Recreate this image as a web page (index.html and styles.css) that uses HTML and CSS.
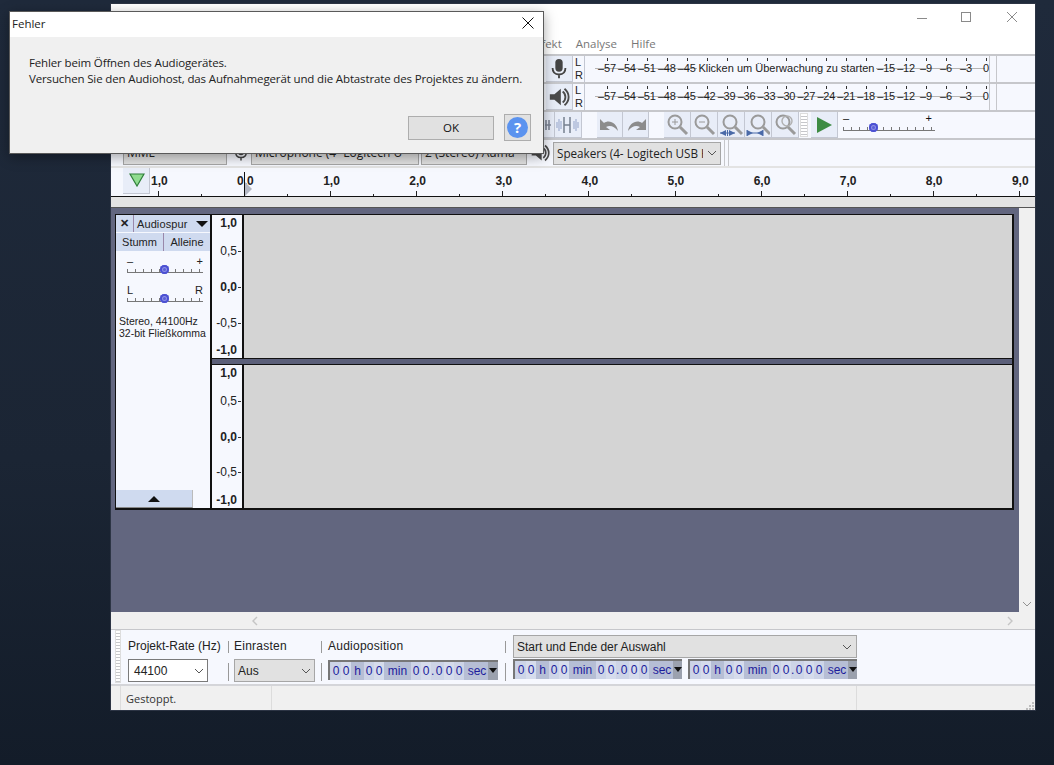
FILE: index.html
```html
<!DOCTYPE html>
<html lang="de">
<head>
<meta charset="utf-8">
<title>Audacity</title>
<link rel="stylesheet" href="styles.css">
</head>
<body>
<svg class="defs" width="0" height="0">
  <symbol id="mic" viewBox="0 0 24 24"><rect x="8" y="1" width="8" height="14" rx="4" fill="#444"/><path d="M5 11c0 5 3 7 7 7s7-2 7-7M12 18v4" fill="none" stroke="#444" stroke-width="2"/></symbol>
  <symbol id="spk" viewBox="0 0 24 24"><path d="M2 9h5l7-6v18l-7-6H2z" fill="#4a4a4a"/><path d="M16 6c4 3 4 9 0 12M18 3c6 5 6 13 0 18" fill="none" stroke="#4a4a4a" stroke-width="2"/></symbol>
  <symbol id="zm" viewBox="0 0 24 24"><circle cx="10" cy="9" r="6.5" fill="none" stroke="#9a9a9a" stroke-width="2"/><path d="M15 14l7 7" stroke="#9a9a9a" stroke-width="3"/></symbol>
  <symbol id="chev" viewBox="0 0 10 6"><path d="M1 1l4 4 4-4" fill="none" stroke="#555" stroke-width="1"/></symbol>
</svg>

<main class="app">
  <div class="titlebar">
    <span class="wc wc-min"></span>
    <span class="wc wc-max"></span>
    <svg class="wc-x" width="12" height="12" viewBox="0 0 12 12"><path d="M1 1l10 10M11 1L1 11" stroke="#8a8a8a" fill="none"/></svg>
  </div>
  <nav class="menu"><span>Effekt</span><span>Analyse</span><span>Hilfe</span></nav>

  <section class="tbrow meter-row">
    <button class="tbtn meter-btn"><svg width="22" height="24"><use href="#mic"/></svg></button>
    <div class="lr"><span>L</span><span>R</span></div>
    <div class="meter">
      <span>–57</span><span>–54</span><span>–51</span><span>–48</span><span>–45</span>
      <span class="meter-msg">Klicken um Überwachung zu starten</span>
      <span>–15</span><span>–12</span><span>–9</span><span>–6</span><span>–3</span><span>0</span>
    </div>
    <i class="grip"></i>
  </section>
  <section class="tbrow meter-row">
    <button class="tbtn meter-btn"><svg width="22" height="24"><use href="#spk"/></svg></button>
    <div class="lr"><span>L</span><span>R</span></div>
    <div class="meter">
      <span>–57</span><span>–54</span><span>–51</span><span>–48</span><span>–45</span><span>–42</span><span>–39</span><span>–36</span><span>–33</span><span>–30</span><span>–27</span><span>–24</span><span>–21</span><span>–18</span><span>–15</span><span>–12</span><span>–9</span><span>–6</span><span>–3</span><span>0</span>
    </div>
    <i class="grip"></i>
  </section>

  <section class="tbrow tools">
    <button class="tbtn b-w"><svg width="24" height="22" viewBox="0 0 24 22"><path d="M16 11h6" stroke="#7c8494" stroke-width="1.5" fill="none"/><path d="M17 6v10M20 6v10" stroke="#7c8494" stroke-width="1.6" fill="none"/></svg></button>
    <button class="tbtn b-w"><svg width="24" height="22" viewBox="0 0 24 22"><path d="M1 8v6M3 5v12M5 7v8M18 7v8M20 5v12M22 8v6" stroke="#93a3c9" fill="none"/><path d="M8 3v16M14 3v16M8 11h6" stroke="#76808f" stroke-width="1.5" fill="none"/></svg></button>
    <span class="gap-15"></span>
    <button class="tbtn b-u"><svg width="24" height="16" viewBox="0 0 24 16"><path d="M2 2v11h10l-4-3c4-2 8-1 12 4-1-8-9-12-14-8z" fill="#8c8c8c"/></svg></button>
    <button class="tbtn b-u"><svg width="24" height="16" viewBox="0 0 24 16"><path d="M22 2v11H12l4-3c-4-2-8-1-12 4 1-8 9-12 14-8z" fill="#8c8c8c"/></svg></button>
    <span class="gap-15"></span>
    <button class="tbtn b-w"><svg width="24" height="24"><use href="#zm"/><path d="M7 9h6M10 6v6" stroke="#9a9a9a"/></svg></button>
    <button class="tbtn b-w"><svg width="24" height="24"><use href="#zm"/><path d="M7 9h6" stroke="#9a9a9a"/></svg></button>
    <button class="tbtn b-w"><svg width="24" height="24"><use href="#zm" x="1"/><path d="M1 20h15" stroke="#4a6aa8"/><path d="M1 20l6-3v6zM16 20l-6-3v6z" fill="#4a6aa8"/><path d="M8.5 17v6" stroke="#4a6aa8"/></svg></button>
    <button class="tbtn b-w"><svg width="24" height="24"><use href="#zm" x="2"/><path d="M1 20h16M1 17v6M17 17v6" stroke="#4a6aa8"/><path d="M1 17l6 3-6 3zM17 17l-6 3 6 3z" fill="#4a6aa8"/></svg></button>
    <button class="tbtn b-w"><svg width="24" height="24"><use href="#zm"/><circle cx="14" cy="8" r="5" fill="none" stroke="#b0b0b0" stroke-width="1.4"/></svg></button>
    <i class="grip-v"></i>
    <button class="tbtn b-play"><svg width="18" height="18" viewBox="0 0 18 18"><path d="M2 1l15 8-15 8z" fill="#3d8b43"/></svg></button>
    <div class="speed">
      <div class="speed-ends"><span>–</span><span>+</span></div>
      <div class="slider speed-track"><b class="thumb thumb-speed"></b></div>
    </div>
  </section>

  <section class="tbrow devices">
    <div class="sel sel-host"><span>MME</span></div>
    <svg class="dev-ico" width="18" height="22"><use href="#mic"/></svg>
    <div class="sel sel-mic"><span>Microphone (4- Logitech U</span></div>
    <div class="sel sel-ch"><span>2 (Stereo) Aufna</span></div>
    <svg class="dev-ico dev-spk" width="20" height="22"><use href="#spk"/></svg>
    <div class="sel sel-spk"><span>Speakers (4- Logitech USB H</span><svg width="10" height="6"><use href="#chev"/></svg></div>
    <i class="grip-dev"></i>
  </section>

  <section class="ruler">
    <button class="pin"><svg width="16" height="14" viewBox="0 0 16 14"><path d="M1 1h14L8 13z" fill="#8fdc8f" stroke="#2f7f3a" stroke-width="1.2"/></svg></button>
    <div class="ticks">
      <span>1,0</span><span class="zero">0,0</span><span>1,0</span><span>2,0</span><span>3,0</span><span>4,0</span><span>5,0</span><span>6,0</span><span>7,0</span><span>8,0</span><span>9,0</span>
    </div>
  </section>
  <div class="under-ruler"></div>

  <section class="workspace">
    <div class="tracks">
      <div class="track">
        <aside class="panel">
          <div class="p-head"><span class="p-x">✕</span><span class="p-name">Audiospur</span><i class="tri-down"></i></div>
          <div class="p-btns"><span>Stumm</span><span>Alleine</span></div>
          <div class="p-ends p-ends-gain"><span>–</span><span>+</span></div>
          <div class="slider p-slider"><b class="thumb"></b></div>
          <div class="p-ends p-ends-pan"><span>L</span><span>R</span></div>
          <div class="slider p-slider"><b class="thumb"></b></div>
          <p class="p-info">Stereo, 44100Hz<br>32-bit Fließkomma</p>
          <div class="p-collapse"><i class="tri-up"></i></div>
        </aside>
        <div class="channels">
          <div class="channel ch-1">
            <div class="scale"><b>1,0</b><span>0,5</span><b>0,0</b><span>-0,5</span><b>-1,0</b></div>
            <div class="wave"></div>
          </div>
          <div class="channel ch-2">
            <div class="scale"><b>1,0</b><span>0,5</span><b>0,0</b><span>-0,5</span><b>-1,0</b></div>
            <div class="wave"></div>
          </div>
        </div>
      </div>
    </div>
    <div class="vscroll"><svg width="10" height="6"><use href="#chev"/></svg></div>
  </section>
  <div class="hscroll">
    <svg width="6" height="10" viewBox="0 0 6 10"><path d="M5 1L1 5l4 4" fill="none" stroke="#aaa" stroke-width="1.4"/></svg>
    <svg width="6" height="10" viewBox="0 0 6 10"><path d="M1 1l4 4-4 4" fill="none" stroke="#aaa" stroke-width="1.4"/></svg>
  </div>

  <section class="selbar">
    <i class="grip-sel"></i>
    <div class="col col-rate">
      <label>Projekt-Rate (Hz)</label>
      <div class="sel sel-rate"><span>44100</span><svg width="10" height="6"><use href="#chev"/></svg></div>
    </div>
    <i class="seps"></i>
    <div class="col col-snap">
      <label>Einrasten</label>
      <div class="sel sel-snap"><span>Aus</span><svg width="10" height="6"><use href="#chev"/></svg></div>
    </div>
    <i class="seps"></i>
    <div class="col col-pos">
      <label>Audioposition</label>
      <div class="time"><u>0</u><u>0</u><em class="uh">h</em><u>0</u><u>0</u><em class="um">min</em><u>0</u><u>0</u><s>.</s><u>0</u><u>0</u><u>0</u><em class="us">sec</em><i class="t-arrow"></i></div>
    </div>
    <i class="seps"></i>
    <div class="col col-range">
      <div class="sel sel-range"><span>Start und Ende der Auswahl</span><svg width="10" height="6"><use href="#chev"/></svg></div>
      <div class="times">
        <div class="time"><u>0</u><u>0</u><em class="uh">h</em><u>0</u><u>0</u><em class="um">min</em><u>0</u><u>0</u><s>.</s><u>0</u><u>0</u><u>0</u><em class="us">sec</em><i class="t-arrow"></i></div>
        <div class="time"><u>0</u><u>0</u><em class="uh">h</em><u>0</u><u>0</u><em class="um">min</em><u>0</u><u>0</u><s>.</s><u>0</u><u>0</u><u>0</u><em class="us">sec</em><i class="t-arrow"></i></div>
      </div>
    </div>
  </section>

  <footer class="status">
    <span class="st-main">Gestoppt.</span>
    <span class="st-fill"></span>
    <svg class="st-grip" width="9" height="9" viewBox="0 0 9 9"><path d="M7 1h2v2H7zM4 4h2v2H4zM7 4h2v2H7zM1 7h2v2H1zM4 7h2v2H4zM7 7h2v2H7z" fill="#bdbdbd"/></svg>
  </footer>
</main>

<div class="dialog" role="dialog">
  <header class="d-title">
    <span>Fehler</span>
    <svg width="12" height="12" viewBox="0 0 12 12"><path d="M.5.5l11 11M11.5.5l-11 11" stroke="#111" fill="none"/></svg>
  </header>
  <div class="d-body">
    <p class="d-msg">Fehler beim Öffnen des Audiogerätes.<br>Versuchen Sie den Audiohost, das Aufnahmegerät und die Abtastrate des Projektes zu ändern.</p>
    <div class="d-actions">
      <button class="d-ok">OK</button>
      <button class="d-help"><span>?</span></button>
    </div>
  </div>
</div>
</body>
</html>
```
FILE: styles.css
```css
* { box-sizing: border-box; }
html, body { margin: 0; height: 100%; }
body {
  width: 1054px; height: 765px; overflow: hidden; position: relative;
  background: linear-gradient(180deg, #1f2a3b 0%, #1b2534 60%, #131c29 100%);
  font-family: "Liberation Sans", Arial, sans-serif; color: #111;
}
.defs { position: absolute; }
button { font: inherit; padding: 0; margin: 0; }

.app {
  position: absolute; left: 111px; top: 4px; width: 924px; height: 706px;
  background: #f0f0f0; display: flex; flex-direction: column; overflow: hidden;
  box-shadow: 0 0 0 1px #2c3444;
}
.titlebar { height: 32px; background: #fff; flex: none; position: relative; }
.wc { position: absolute; display: block; }
.wc-min { left: 806px; top: 14px; width: 10px; border-top: 1px solid #8a8a8a; }
.wc-max { left: 850px; top: 8px; width: 10px; height: 10px; border: 1px solid #8a8a8a; }
.wc-x { position: absolute; left: 895px; top: 7px; }

.menu {
  height: 18px; flex: none; background: #fff; padding-left: 420px; display: flex; gap: 14px;
  font: 11.5px/16px "Open Sans", sans-serif; color: #777;
}

.tbrow { flex: none; display: flex; align-items: center; background: #f6f8fe; }
.meter-row { height: 28px; border-top: 2px solid #c6c7cb; padding-left: 435px; }
.tbtn {
  border: 0; border-right: 1px solid #c3c7d2; border-bottom: 1px solid #c3c7d2;
  background: #e8edf8; display: flex; align-items: center; justify-content: center;
}
.meter-btn { width: 27px; height: 26px; }
.lr { width: 11px; margin-left: 1px; display: flex; flex-direction: column; font-size: 11px; line-height: 12.5px; border-right: 1px solid #c3c7d2; padding-left: 1px; height: 26px; color: #222; }
.meter {
  width: 403px; height: 26px; display: flex; align-items: center; padding: 0 0 2px 12px; font-size: 11px; color: #222;
  background:
    linear-gradient(#b4b4b4, #b4b4b4) 10px 12px / 390px 1px no-repeat,
    repeating-linear-gradient(90deg, #333 0 1px, transparent 1px 19.94px) 22px 2px / 100% 3px no-repeat,
    #f6f8fe;
}
.meter span { width: 19.94px; flex: none; text-align: center; letter-spacing: -.2px; }
.meter .meter-msg { width: 179.5px; white-space: nowrap; background: #f6f8fe; letter-spacing: 0; font-size: 11px; }
.grip { width: 8px; height: 26px; margin-left: 1px; border-left: 1px solid #c6c7cb; border-right: 1px solid #c6c7cb; }

.tools { height: 28px; border-top: 2px solid #c6c7cb; padding-left: 417px; }
.b-w { width: 27px; height: 26px; }
.b-u { width: 26px; height: 26px; }
.gap-15 { width: 15px; flex: none; }
.b-play { width: 27px; height: 26px; margin-left: 3px; }
.grip-v { width: 8px; height: 24px; margin-left: 1px; background: repeating-linear-gradient(#fff 0 2px, #c6c7cb 2px 3px); border: 1px solid #ddd; }
.speed { width: 92px; margin-left: 5px; height: 26px; padding-top: 1px; }
.speed-ends { display: flex; justify-content: space-between; font-size: 11px; line-height: 11px; padding-right: 3px; width: 92px; }
.slider {
  position: relative; height: 6px; width: 92px;
  border-bottom: 1px solid #777;
  background: repeating-linear-gradient(90deg, #777 0 1px, transparent 1px 8px) 0 2px / 100% 4px no-repeat;
}
.thumb { position: absolute; top: -2px; left: 26px; width: 9px; height: 9px; border-radius: 50%; background: #5b5fd6; box-shadow: inset 0 0 0 2px #4b50d2, inset 0 0 0 3px #8e92e6; }
.speed-track { margin-top: 1px; }

.devices { height: 28px; border-top: 2px solid #c6c7cb; padding-left: 12px; }
.sel {
  display: flex; align-items: center; justify-content: space-between; background: #e1e1e1; border: 1px solid #a6a6a6;
  font: 12px/18px "Open Sans", sans-serif; padding: 0 3px 0 3px; overflow: hidden; white-space: nowrap; color: #222;
}
.devices .sel { height: 23px; }
.sel-host { width: 104px; }
.sel-mic { width: 168px; }
.sel-ch { width: 106px; margin-left: 2px; }
.dev-ico { margin: 0 1px 0 5px; flex: none; }
.dev-spk { margin: 0 3px 0 3px; }
.sel-spk { width: 168px; font-size: 11.7px; }
.sel-spk span { width: 146px; overflow: hidden; }
.grip-dev { width: 5px; height: 26px; margin-left: 3px; border-left: 1px solid #c6c7cb; border-right: 1px solid #c6c7cb; }

.ruler { height: 31px; flex: none; background: #f6f8fe; border-top: 2px solid #e3e3e3; border-bottom: 1px solid #111; position: relative; display: flex; }
.pin { width: 27px; height: 26px; margin: 0 0 0 12px; border: 0; border-right: 1px solid #c3c7d2; border-bottom: 1px solid #c3c7d2; background: #e8edf8; display: flex; align-items: center; justify-content: center; flex: none; padding: 0 0 2px 2px; }
.ticks { position: absolute; left: 47px; top: 0; bottom: 0; display: flex; font-weight: bold; font-size: 12px; color: #222; }
.ticks span {
  width: 86.1px; flex: none; position: relative; padding-top: 6px; text-indent: -7px; line-height: 14px;
  background:
    linear-gradient(#222, #222) 0 100% / 1px 5px no-repeat,
    linear-gradient(#222, #222) 43px 100% / 1px 2px no-repeat;
}
.ticks .zero::after { content: ""; position: absolute; left: 0; top: 4px; bottom: 0; width: 1px; background: #111; }
.ticks .zero::before { content: ""; position: absolute; left: 1px; bottom: 0; border-left: 7px solid #b3b8c4; border-top: 7px solid transparent; border-bottom: 7px solid transparent; }
.under-ruler { height: 11px; flex: none; background: #e3e3e3; border-bottom: 1px solid #555; }

.workspace { height: 404px; flex: none; background: #62667f; display: flex; }
.tracks { width: 908px; padding: 6px 0 0 4px; flex: none; }
.track { width: 899px; height: 296px; border: 1px solid #111; border-width: 1px 2px 2px 1px; display: flex; }
.panel { width: 96px; flex: none; background: #f6f8fe; border-right: 2px solid #111; display: flex; flex-direction: column; position: relative; font-size: 11px; color: #222; }
.p-head { height: 18px; display: flex; align-items: center; background: #cfdaef; border-bottom: 1px solid #f6f8fe; position: relative; }
.p-x { width: 18px; text-align: center; font-size: 11px; font-weight: bold; border-right: 1px solid #98a; line-height: 17px; }
.p-name { padding-left: 3px; letter-spacing: .1px; }
.tri-down { position: absolute; right: 2px; top: 6px; border: 6px solid transparent; border-top-color: #111; border-bottom: 0; }
.p-btns { height: 18px; display: flex; background: #cfdaef; line-height: 19px; text-align: center; }
.p-btns span { width: 47px; }
.p-btns span + span { width: 47px; border-left: 1px solid #98a; }
.p-ends { display: flex; justify-content: space-between; width: 76px; margin-left: 11px; line-height: 10px; font-size: 11px; }
.p-ends-gain { margin-top: 5px; }
.p-ends-pan { margin-top: 12px; }
.p-slider { width: 76px; margin-left: 11px; margin-top: 1px; }
.p-slider .thumb { left: 33px; }
.p-info { margin: 13px 0 0 3px; line-height: 12px; font-size: 10.5px; white-space: nowrap; }
.p-collapse { position: absolute; left: 0; bottom: 0; width: 77px; height: 18px; background: #cfdaef; border-bottom: 1px solid #888; border-right: 1px solid #bbb; display: flex; align-items: center; justify-content: center; }
.tri-up { border: 6px solid transparent; border-bottom-color: #111; border-top: 0; }

.channels { flex: 1; display: flex; flex-direction: column; background: #5b5f79; }
.channel { display: flex; background: #f6f8fe; }
.ch-1 { height: 144px; border-bottom: 1px solid #111; margin-bottom: 5px; }
.ch-2 { flex: 1; border-top: 1px solid #111; }
.scale {
  width: 32px; flex: none; border-right: 2px solid #111; position: relative; font-size: 12px; color: #222;
}
.scale > * { position: absolute; right: 5px; line-height: 14px; }
.scale > *:nth-child(n+2):nth-child(-n+4)::after { content: ""; position: absolute; right: -4px; top: 7px; width: 3px; height: 1px; background: #333; }
.scale > *:nth-child(1) { top: 1px; }
.scale > *:nth-child(2) { top: 29px; }
.scale > *:nth-child(3) { top: 65px; }
.scale > *:nth-child(4) { top: 101px; }
.scale > *:nth-child(5) { top: 128px; }
.ch-2 .scale > *:nth-child(4) { top: 100px; }
.wave { flex: 1; background: #d4d4d4; }
.vscroll { flex: 1; background: #f0f0f0; display: flex; align-items: flex-end; justify-content: center; padding-bottom: 5px; }
.vscroll svg, .hscroll svg { opacity: .6; }

.hscroll { height: 17px; flex: none; background: #f0f0f0; display: flex; justify-content: space-between; align-items: center; padding: 0 22px 0 141px; }

.selbar { height: 57px; flex: none; background: #f6f8fe; border-top: 1px solid #c6c7cb; border-bottom: 2px solid #d4d5d9; display: flex; align-items: flex-start; padding-left: 4px; position: relative; font-size: 12px; color: #222; }
.grip-sel { width: 6px; height: 53px; background: repeating-linear-gradient(#fff 0 2px, #c6c7cb 2px 3px); border: 1px solid #ddd; flex: none; }
.col { display: flex; flex-direction: column; padding-top: 8px; flex: none; }
.col label { line-height: 17px; height: 21px; white-space: nowrap; }
.col-snap label, .col-pos label { letter-spacing: .25px; }
.col-rate { width: 80px; margin-left: 7px; }
.col-snap { width: 81px; }
.col-pos { width: 170px; }
.col-range { width: 344px; padding-top: 5px; }
.seps {
  width: 1px; height: 40px; margin: 11px 5px 0 20px; flex: none;
  background: linear-gradient(#999 0 12px, transparent 12px 22px, #999 22px);
}
.sel-rate { width: 80px; height: 23px; background: #fff; border-color: #7a7a7a; font-family: "Liberation Sans", sans-serif; padding: 0 3px 0 5px; }
.sel-snap { width: 81px; height: 23px; font-family: "Liberation Sans", sans-serif; }
.col-snap + .seps { margin-left: 6px; margin-right: 6px; }
.col-rate + .seps { margin-right: 5px; }
.sel-range { width: 344px; height: 23px; font-family: "Liberation Sans", sans-serif; padding-right: 4px; }
.col-pos + .seps { margin-left: 7px; margin-right: 7px; }
.col-range .times { display: flex; justify-content: space-between; margin-top: 1px; }
.col-pos .time { margin-top: 1px; }
.time {
  width: 170px; height: 20px; display: flex; align-items: center; background: #c9d1e4; border: 2px solid #777; border-width: 2px 0 0 2px;
  padding-left: 1px; font-size: 12px; line-height: 18px; color: #1c1c9c; white-space: nowrap;
}
.col-range .time { width: 169px; }
.time u { text-decoration: none; width: 10px; text-align: center; height: 18px; background: #cdd4e7; }
.time u:nth-of-type(even) { background: #d6dcec; }
.time s { text-decoration: none; width: 3px; height: 18px; text-align: center; background: #cdd4e7; }
.time em { font-style: normal; text-align: center; height: 18px; background: #b6bed5; }
.time .uh { width: 13px; }
.time .um { width: 27px; }
.time .us { width: 24px; padding-left: 2px; }
.t-arrow { flex: 1; height: 18px; background: #9ba1ae; position: relative; }
.t-arrow::after { content: ""; position: absolute; left: 1px; top: 6px; border: 4px solid transparent; border-top: 5px solid #111; border-bottom: 0; }

.status { flex: 1; background: #f0f0f0; display: flex; font: 11px/25px "Open Sans", sans-serif; color: #333; padding-left: 9px; position: relative; }
.st-main { width: 152px; padding-left: 5px; border-left: 1px solid #dcdcdc; border-right: 1px solid #dcdcdc; }
.st-fill { width: 585px; border-right: 1px solid #dcdcdc; }
.st-grip { position: absolute; right: 1px; bottom: 1px; }

.dialog {
  position: absolute; left: 9px; top: 11px; width: 535px; height: 143px;
  background: #f0f0f0; border: 1px solid #5a5a5a; box-shadow: 0 3px 12px rgba(0,0,0,.35);
  display: flex; flex-direction: column; font-family: "Open Sans", sans-serif; color: #222;
}
.d-title { height: 25px; flex: none; background: #fff; display: flex; justify-content: space-between; align-items: center; padding: 0 9px 3px 2px; font-size: 11.5px; }
.d-body { flex: 1; display: flex; flex-direction: column; }
.d-msg { margin: 18px 0 0 19px; font-size: 11.5px; line-height: 16px; white-space: nowrap; letter-spacing: -.14px; }
.d-actions { display: flex; gap: 10px; align-items: center; margin: 27px 0 0 398px; }
.d-ok { width: 86px; height: 24px; background: #e1e1e1; border: 1px solid #adadad; font-size: 11.5px; color: #111; font-family: "Open Sans", sans-serif; }
.d-help { width: 27px; height: 27px; background: #e1e1e1; border: 1px solid #adadad; display: flex; align-items: center; justify-content: center; }
.d-help span { width: 21px; height: 21px; border-radius: 50%; background: #5b93ef; color: #fff; font: bold 15px/21px "Open Sans", sans-serif; text-align: center; }
```
